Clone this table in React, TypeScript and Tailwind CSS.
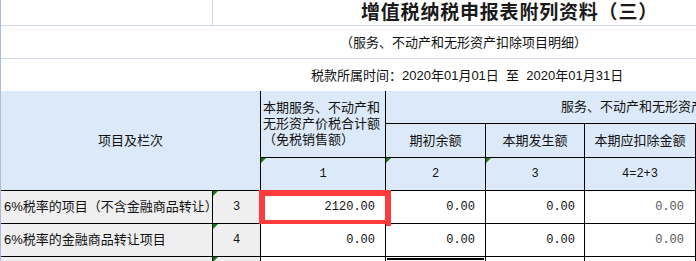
import React from 'react'

const cjk = 'font-["Liberation_Sans","Noto_Sans_CJK_SC",sans-serif]'
const mono = 'font-["Liberation_Mono","Noto_Sans_CJK_SC",monospace]'

// little green marker in the top-left corner of a cell
function Flag() {
  return (
    <div className="absolute left-0 top-0 h-0 w-0 border-t-[5px] border-r-[5px] border-t-[#0f7a17] border-r-transparent" />
  )
}

const rows = [
  { label: '6%税率的项目（不含金融商品转让）', no: '3', total: '2120.00', marked: true },
  { label: '6%税率的金融商品转让项目', no: '4', total: '0.00', marked: false },
]

export default function App() {
  return (
    <div className={`${cjk} h-[261px] w-[696px] overflow-hidden border-l border-[#a9bdd8] bg-white text-[13px] text-[#111]`}>
      {/* Title */}
      <div className="flex h-[26px] border-b border-[#cfd8e6]">
        <div className="w-[212px] border-r border-[#cfd8e6]" />
        <div className="flex-1 pl-[148px] text-[19px] font-bold leading-[25px] tracking-[0.8px] text-[#1a1a1a]">
          增值税纳税申报表附列资料（三）
        </div>
      </div>
      <div className="flex h-[33px] items-center border-b border-[#cfd8e6] pl-[339px] leading-none">
        （服务、不动产和无形资产扣除项目明细）
      </div>
      <div className="flex h-[32px] items-center whitespace-pre pl-[310px] leading-none">
        {'税款所属时间：2020年01月01日  至  2020年01月31日'}
      </div>

      {/* Table */}
      <div className="grid h-[170px] grid-cols-[212px_48px_125px_100px_99px_111px] grid-rows-[33px_34px_33px_33px_33px_1fr] bg-[#dce9f8]">
        <div className="col-span-2 row-span-3 flex items-center justify-center border-b border-r border-black">
          项目及栏次
        </div>
        <div className="row-span-2 flex items-center border-b border-r border-black pl-[2px] leading-[16px]">
          <div>
            本期服务、不动产和
            <br />
            无形资产价税合计额
            <br />
            （免税销售额）
          </div>
        </div>
        <div className="col-span-3 flex items-center overflow-hidden whitespace-nowrap border-b border-black pl-[175px]">
          服务、不动产和无形资产扣除项目
        </div>
        <div className="flex items-center justify-center border-b border-r border-black">期初余额</div>
        <div className="flex items-center justify-center border-b border-r border-black">本期发生额</div>
        <div className="flex items-center justify-center border-b border-r border-black">本期应扣除金额</div>

        {['1', '2', '3', '4=2+3'].map((n, i) => (
          <div
            key={n}
            className={`${mono} relative flex items-center justify-center border-b border-r border-black text-[12px]`}
          >
            {i < 3 && <Flag />}
            {n}
          </div>
        ))}

        {rows.map((r) => (
          <React.Fragment key={r.no}>
            <div className="flex items-center border-b border-r border-black bg-[#efefef] pl-[3px] whitespace-nowrap">
              {r.label}
            </div>
            <div className={`${mono} relative flex items-center justify-center border-b border-r border-black bg-[#efefef] text-[12px]`}>
              <Flag />
              {r.no}
            </div>
            <div className={`${mono} relative flex items-center justify-end border-b border-r border-black bg-white pr-[10px] text-[12px]`}>
              {r.marked && (
                <div className="absolute -left-[2px] -top-[1px] h-[36px] w-[132px] border-[6px] border-[#fd3a3c]" />
              )}
              {r.total}
            </div>
            <div className={`${mono} flex items-center justify-end border-b border-r border-black bg-white pr-[10px] text-[12px]`}>
              0.00
            </div>
            <div className={`${mono} flex items-center justify-end border-b border-r border-black bg-white pr-[9px] text-[12px]`}>
              0.00
            </div>
            <div className={`${mono} flex items-center justify-end border-b border-r border-black bg-white pr-[11px] text-[12px] text-[#555]`}>
              0.00
            </div>
          </React.Fragment>
        ))}

        {/* next row, cut off */}
        <div className="border-r border-black bg-[#efefef] shadow-[-1px_0_0_#f29b3a]" />
        <div className="relative border-r border-black bg-[#efefef]">
          <Flag />
        </div>
        <div className="border-r border-black bg-white" />
        <div className="-ml-px -mt-px border-[3px] border-double border-black bg-white" />
        <div className="border-r border-black bg-white" />
        <div className="border-r border-black bg-white" />
      </div>
    </div>
  )
}
